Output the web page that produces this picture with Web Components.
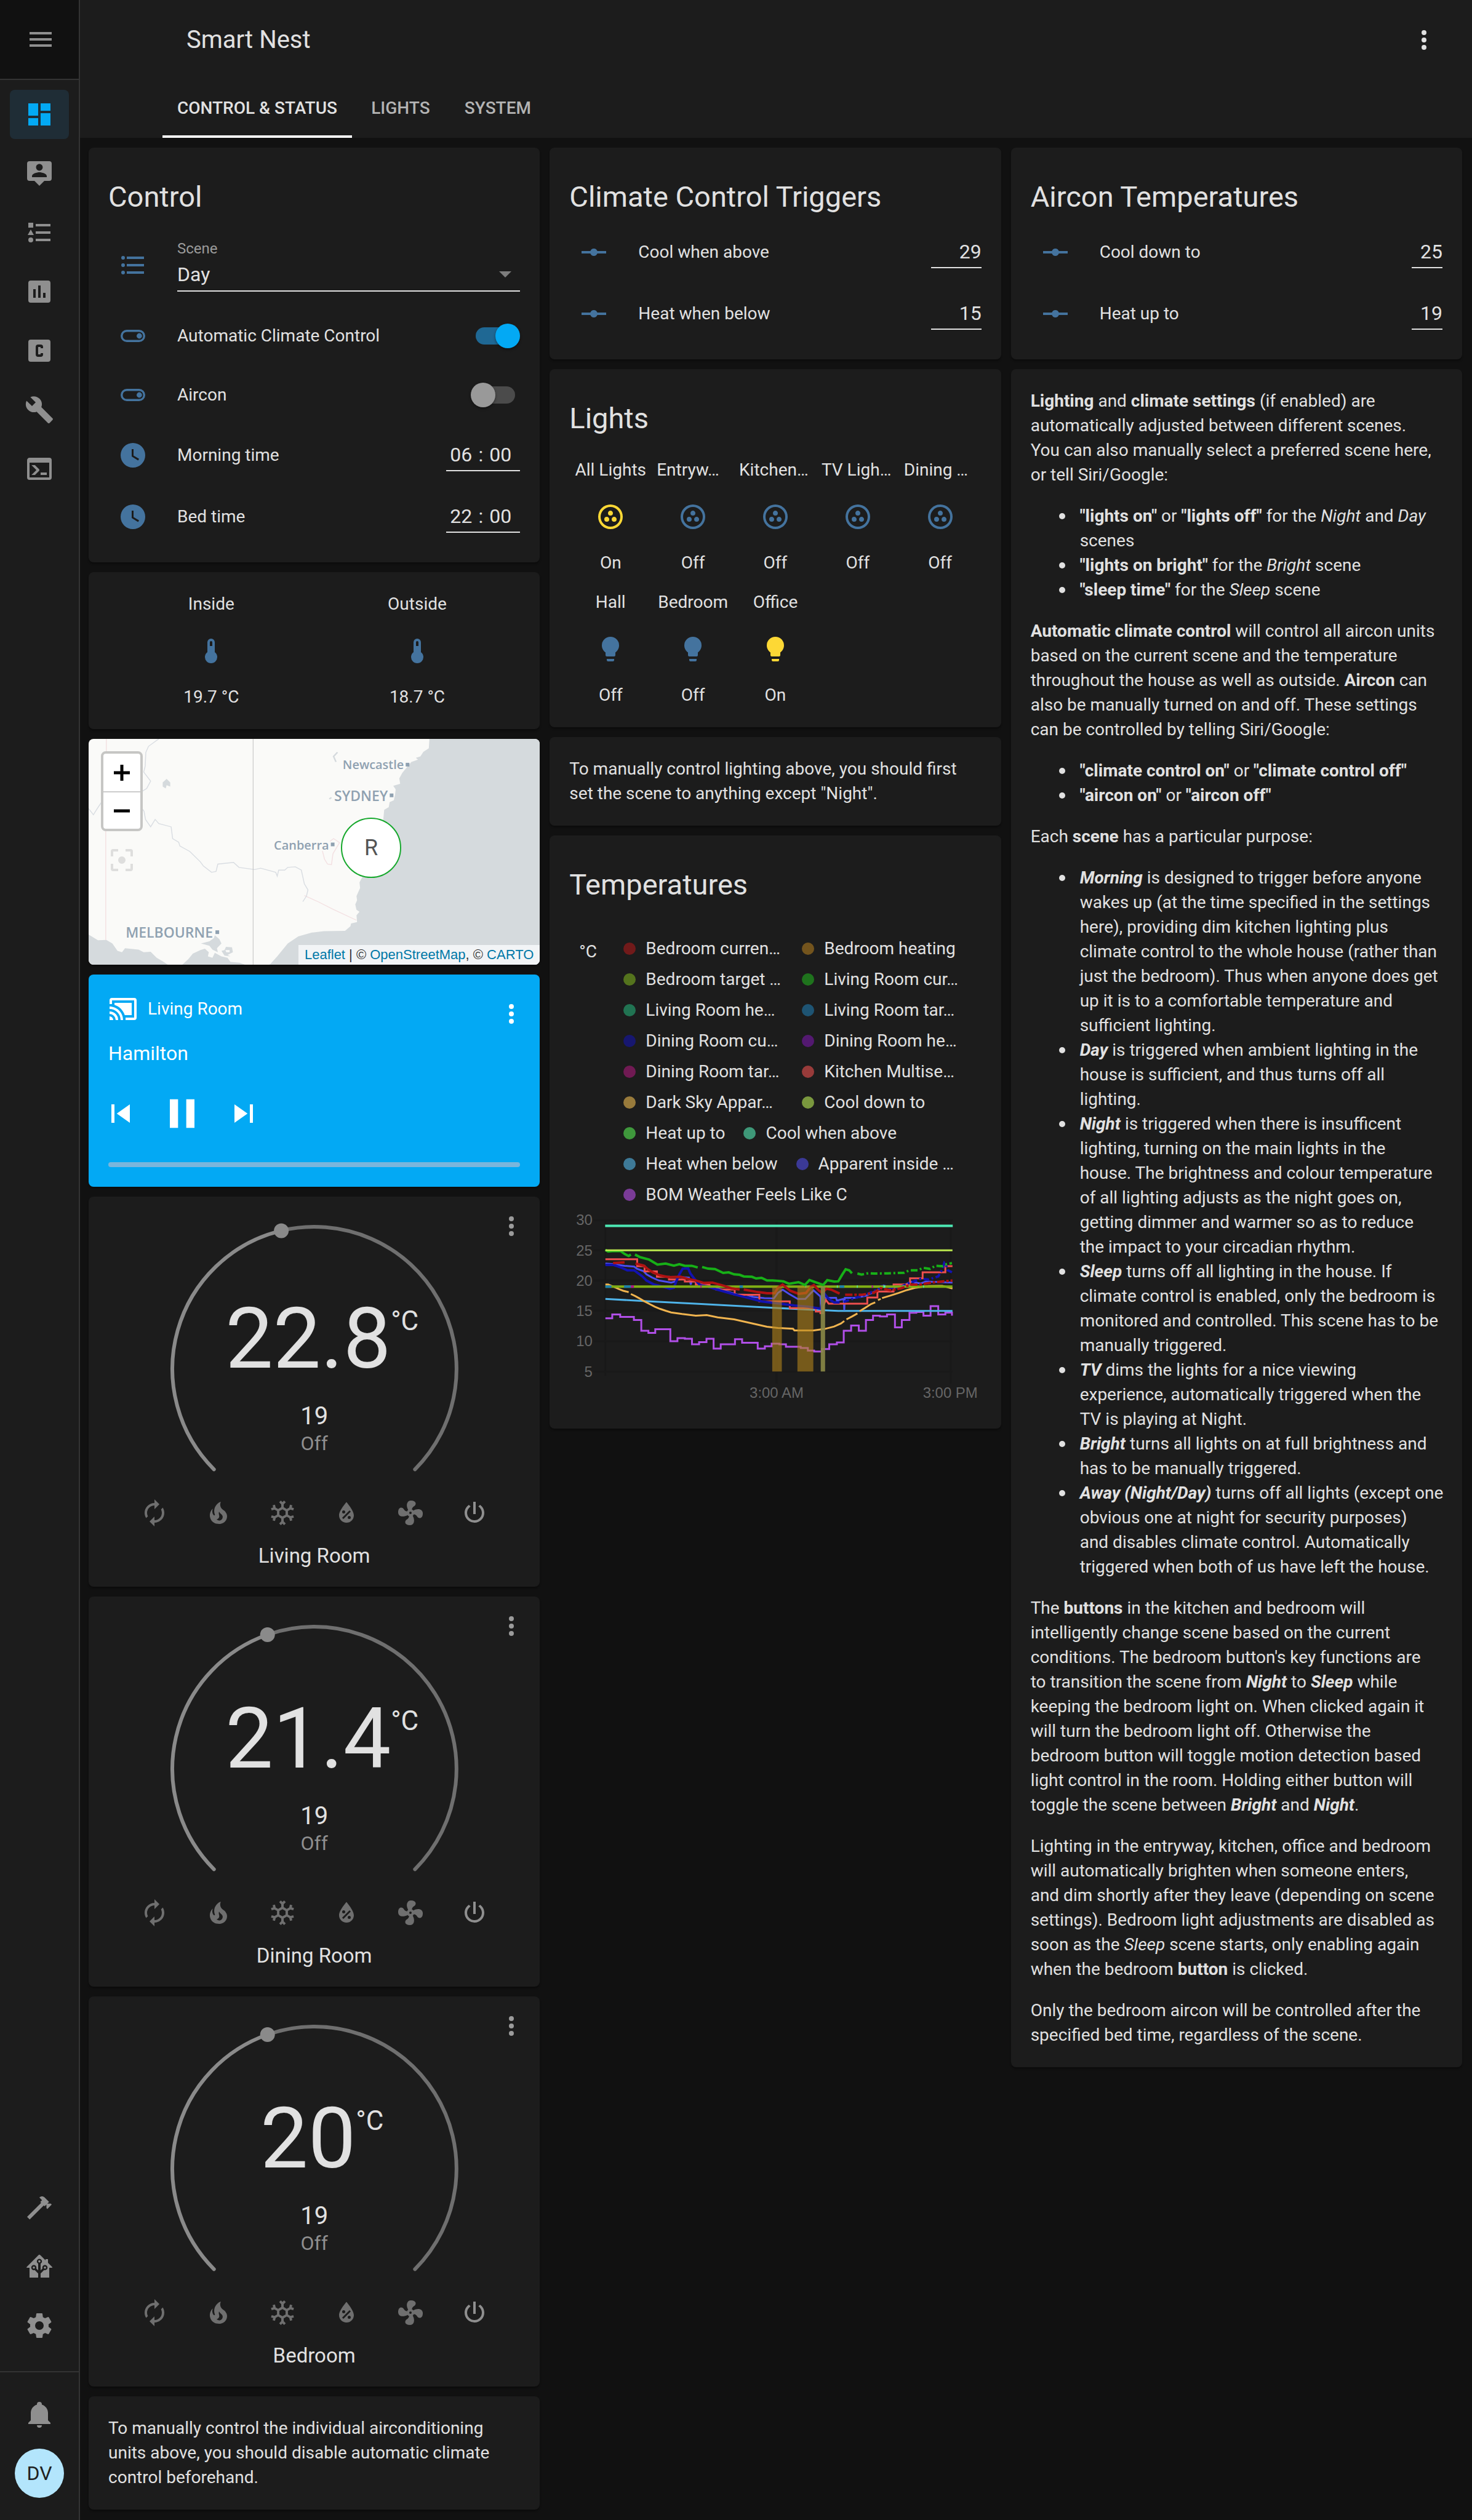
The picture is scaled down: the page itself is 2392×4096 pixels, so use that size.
<!DOCTYPE html>
<html lang="en">
<head>
<meta charset="utf-8">
<title>Smart Nest</title>
<style>
html { background: #111111; }
body {
  margin: 0;
  color: #e1e1e1;
  font: 28px/40px Roboto, "Noto Sans", sans-serif;
  --card: #1c1c1c;
  --line: #333333;
  --muted: #9b9b9b;
  --icon: #44739e;
  --accent: #03a9f4;
  --active: #fdd835;
}
</style>
</head>
<body>
<nest-app>
  <nest-column>
    <nest-card heading="Control">
      <entity-row type="select" icon="list" label="Scene" value="Day"></entity-row>
      <entity-row type="toggle" icon="toggle" label="Automatic Climate Control" on></entity-row>
      <entity-row type="toggle" icon="toggle" label="Aircon"></entity-row>
      <entity-row type="time" icon="clock" label="Morning time" value="06:00"></entity-row>
      <entity-row type="time" icon="clock" label="Bed time" value="22:00"></entity-row>
    </nest-card>
    <nest-card>
      <glance-grid style="--cols:2">
        <glance-item name="Inside" icon="thermometer" state="19.7 °C"></glance-item>
        <glance-item name="Outside" icon="thermometer" state="18.7 °C"></glance-item>
      </glance-grid>
    </nest-card>
    <map-card></map-card>
    <media-card source="Living Room" track="Hamilton"></media-card>
    <thermostat-card name="Living Room" current="22.8" target="19" mode="Off" knob="-13.5"></thermostat-card>
    <thermostat-card name="Dining Room" current="21.4" target="19" mode="Off" knob="-19.3"></thermostat-card>
    <thermostat-card name="Bedroom" current="20" target="19" mode="Off" knob="-19.3"></thermostat-card>
    <nest-card><note-text>To manually control the individual airconditioning units above, you should disable automatic climate control beforehand.</note-text></nest-card>
  </nest-column>
  <nest-column>
    <nest-card heading="Climate Control Triggers">
      <entity-row type="number" icon="vertex" label="Cool when above" value="29"></entity-row>
      <entity-row type="number" icon="vertex" label="Heat when below" value="15"></entity-row>
    </nest-card>
    <nest-card heading="Lights">
      <glance-grid style="--cols:5; padding-top:16px">
        <glance-item name="All Lights" icon="group" state="On" lit></glance-item>
        <glance-item name="Entryw…" cut icon="group" state="Off"></glance-item>
        <glance-item name="Kitchen…" cut icon="group" state="Off"></glance-item>
        <glance-item name="TV Ligh…" cut icon="group" state="Off"></glance-item>
        <glance-item name="Dining …" cut icon="group" state="Off"></glance-item>
        <glance-item name="Hall" icon="bulb" state="Off"></glance-item>
        <glance-item name="Bedroom" icon="bulb" state="Off"></glance-item>
        <glance-item name="Office" icon="bulb" state="On" lit></glance-item>
      </glance-grid>
    </nest-card>
    <nest-card><note-text>To manually control lighting above, you should first set the scene to anything except "Night".</note-text></nest-card>
    <nest-card heading="Temperatures" flush><history-chart></history-chart></nest-card>
  </nest-column>
  <nest-column>
    <nest-card heading="Aircon Temperatures">
      <entity-row type="number" narrow icon="vertex" label="Cool down to" value="25"></entity-row>
      <entity-row type="number" narrow icon="vertex" label="Heat up to" value="19"></entity-row>
    </nest-card>
    <nest-card><help-text></help-text></nest-card>
  </nest-column>
</nest-app>

<script>
const ICONS = {
  menu: 'M3,6H21V8H3V6M3,11H21V13H3V11M3,16H21V18H3V16Z',
  dashboard: 'M13,3V9H21V3M13,21H21V11H13M3,21H11V15H3M3,13H11V3H3V13Z',
  person: 'M20,2H4A2,2 0 0,0 2,4V16A2,2 0 0,0 4,18H8L12,22L16,18H20A2,2 0 0,0 22,16V4A2,2 0 0,0 20,2M12,4.3C13.5,4.3 14.7,5.5 14.7,7C14.7,8.5 13.5,9.7 12,9.7C10.5,9.7 9.3,8.5 9.3,7C9.3,5.5 10.5,4.3 12,4.3M18,15H6V14.1C6,12.1 10,11 12,11C14,11 18,12.1 18,14.1V15Z',
  logbook: 'M5,9.5L7.5,14H2.5L5,9.5M3,4H7V8H3V4M5,20A2,2 0 0,0 7,18A2,2 0 0,0 5,16A2,2 0 0,0 3,18A2,2 0 0,0 5,20M9,5V7H21V5H9M9,19H21V17H9V19M9,13H21V11H9V13Z',
  poll: 'M17,17H15V13H17M13,17H11V7H13M9,17H7V10H9M19,3H5A2,2 0 0,0 3,5V19A2,2 0 0,0 5,21H19A2,2 0 0,0 21,19V5A2,2 0 0,0 19,3Z',
  cbox: 'M5,3H19A2,2 0 0,1 21,5V19A2,2 0 0,1 19,21H5A2,2 0 0,1 3,19V5A2,2 0 0,1 5,3M11,7A2,2 0 0,0 9,9V15A2,2 0 0,0 11,17H13A2,2 0 0,0 15,15V14H13V15H11V9H13V10H15V9A2,2 0 0,0 13,7H11Z',
  wrench: 'M22.7,19L13.6,9.9C14.5,7.6 14,4.9 12.1,3C10.1,1 7.1,0.6 4.7,1.7L9,6L6,9L1.6,4.7C0.4,7.1 0.9,10.1 2.9,12.1C4.8,14 7.5,14.5 9.8,13.6L18.9,22.7C19.3,23.1 19.9,23.1 20.3,22.7L22.6,20.4C23.1,20 23.1,19.3 22.7,19Z',
  console: 'M20,19V7H4V19H20M20,3A2,2 0 0,1 22,5V19A2,2 0 0,1 20,21H4A2,2 0 0,1 2,19V5C2,3.89 2.9,3 4,3H20M13,17V15H18V17H13M9.58,13L5.57,9H8.4L11.7,12.3C12.09,12.69 12.09,13.33 11.7,13.72L8.42,17H5.59L9.58,13Z',
  hammer: 'M2,19.63L13.43,8.2L12.72,7.5L14.14,6.07L12,3.89C13.2,2.7 15.09,2.7 16.27,3.89L19.87,7.5L18.45,8.91H21.29L22,9.62L18.45,13.21L17.74,12.5V9.62L16.27,11.04L15.56,10.33L4.13,21.76L2,19.63Z',
  home: 'M21.8,13H20V21H13V17.67L15.79,14.88L16.5,15C17.66,15 18.6,14.06 18.6,12.9C18.6,11.74 17.66,10.8 16.5,10.8A2.1,2.1 0 0,0 14.4,12.9L14.5,13.61L13,15.13V9.65C13.66,9.29 14.1,8.6 14.1,7.8A2.1,2.1 0 0,0 12,5.7A2.1,2.1 0 0,0 9.9,7.8C9.9,8.6 10.34,9.29 11,9.65V15.13L9.5,13.61L9.6,12.9A2.1,2.1 0 0,0 7.5,10.8A2.1,2.1 0 0,0 5.4,12.9A2.1,2.1 0 0,0 7.5,15L8.21,14.88L11,17.67V21H4V13H2.25C1.83,13 1.42,13 1.42,12.79C1.43,12.57 1.85,12.15 2.28,11.72L11,3C11.33,2.67 11.67,2.33 12,2.33C12.33,2.33 12.67,2.67 13,3L17,7V6H19V9L21.78,11.78C22.18,12.18 22.59,12.59 22.6,12.8C22.6,13 22.2,13 21.8,13M7.5,12A0.9,0.9 0 0,1 8.4,12.9A0.9,0.9 0 0,1 7.5,13.8A0.9,0.9 0 0,1 6.6,12.9A0.9,0.9 0 0,1 7.5,12M16.5,12C17,12 17.4,12.4 17.4,12.9C17.4,13.4 17,13.8 16.5,13.8A0.9,0.9 0 0,1 15.6,12.9A0.9,0.9 0 0,1 16.5,12M12,6.9C12.5,6.9 12.9,7.3 12.9,7.8C12.9,8.3 12.5,8.7 12,8.7C11.5,8.7 11.1,8.3 11.1,7.8C11.1,7.3 11.5,6.9 12,6.9Z',
  cog: 'M12,15.5A3.5,3.5 0 0,1 8.5,12A3.5,3.5 0 0,1 12,8.5A3.5,3.5 0 0,1 15.5,12A3.5,3.5 0 0,1 12,15.5M19.43,12.97C19.47,12.65 19.5,12.33 19.5,12C19.5,11.67 19.47,11.34 19.43,11L21.54,9.37C21.73,9.22 21.78,8.95 21.66,8.73L19.66,5.27C19.54,5.05 19.27,4.96 19.05,5.05L16.56,6.05C16.04,5.66 15.5,5.32 14.87,5.07L14.5,2.42C14.46,2.18 14.25,2 14,2H10C9.75,2 9.54,2.18 9.5,2.42L9.13,5.07C8.5,5.32 7.96,5.66 7.44,6.05L4.95,5.05C4.73,4.96 4.46,5.05 4.34,5.27L2.34,8.73C2.21,8.95 2.27,9.22 2.46,9.37L4.57,11C4.53,11.34 4.5,11.67 4.5,12C4.5,12.33 4.53,12.65 4.57,12.97L2.46,14.63C2.27,14.78 2.21,15.05 2.34,15.27L4.34,18.73C4.46,18.95 4.73,19.03 4.95,18.95L7.44,17.94C7.96,18.34 8.5,18.68 9.13,18.93L9.5,21.58C9.54,21.82 9.75,22 10,22H14C14.25,22 14.46,21.82 14.5,21.58L14.87,18.93C15.5,18.67 16.04,18.34 16.56,17.94L19.05,18.95C19.27,19.03 19.54,18.95 19.66,18.73L21.66,15.27C21.78,15.05 21.73,14.78 21.54,14.63L19.43,12.97Z',
  bell: 'M21,19V20H3V19L5,17V11C5,7.9 7.03,5.17 10,4.29C10,4.19 10,4.1 10,4A2,2 0 0,1 12,2A2,2 0 0,1 14,4C14,4.1 14,4.19 14,4.29C16.97,5.17 19,7.9 19,11V17L21,19M14,21A2,2 0 0,1 12,23A2,2 0 0,1 10,21',
  list: 'M7,5H21V7H7V5M7,13V11H21V13H7M4,4.5A1.5,1.5 0 0,1 5.5,6A1.5,1.5 0 0,1 4,7.5A1.5,1.5 0 0,1 2.5,6A1.5,1.5 0 0,1 4,4.5M4,10.5A1.5,1.5 0 0,1 5.5,12A1.5,1.5 0 0,1 4,13.5A1.5,1.5 0 0,1 2.5,12A1.5,1.5 0 0,1 4,10.5M7,19V17H21V19H7M4,16.5A1.5,1.5 0 0,1 5.5,18A1.5,1.5 0 0,1 4,19.5A1.5,1.5 0 0,1 2.5,18A1.5,1.5 0 0,1 4,16.5Z',
  toggle: 'M17,7H7A5,5 0 0,0 2,12A5,5 0 0,0 7,17H17A5,5 0 0,0 22,12A5,5 0 0,0 17,7M17,15.3H7A3.3,3.3 0 0,1 7,8.7H17A3.3,3.3 0 0,1 17,15.3M17.2,9.8A2.2,2.2 0 0,0 17.2,14.2A2.2,2.2 0 0,0 17.2,9.8Z',
  clock: 'M12,2A10,10 0 0,0 2,12A10,10 0 0,0 12,22A10,10 0 0,0 22,12A10,10 0 0,0 12,2M16.2,16.2L11,13V7H12.5V12.2L17,14.9L16.2,16.2Z',
  thermometer: 'M15,13V5A3,3 0 0,0 9,5V13A5,5 0 1,0 15,13M12,4A1,1 0 0,1 13,5V8H11V5A1,1 0 0,1 12,4Z',
  vertex: 'M2,11H9.17C9.58,9.83 10.69,9 12,9C13.31,9 14.42,9.83 14.83,11H22V13H14.83C14.42,14.17 13.31,15 12,15C10.69,15 9.58,14.17 9.17,13H2V11Z',
  group: 'M15,12C13.89,12 13,12.89 13,14A2,2 0 0,0 15,16A2,2 0 0,0 17,14C17,12.89 16.1,12 15,12M12,20A8,8 0 0,1 4,12A8,8 0 0,1 12,4A8,8 0 0,1 20,12A8,8 0 0,1 12,20M12,2A10,10 0 0,0 2,12A10,10 0 0,0 12,22A10,10 0 0,0 22,12A10,10 0 0,0 12,2M14,9C14,7.89 13.1,7 12,7C10.89,7 10,7.89 10,9A2,2 0 0,0 12,11A2,2 0 0,0 14,9M9,12A2,2 0 0,0 7,14A2,2 0 0,0 9,16A2,2 0 0,0 11,14C11,12.89 10.1,12 9,12Z',
  bulb: 'M12,2A7,7 0 0,0 5,9C5,11.38 6.19,13.47 8,14.74V17A1,1 0 0,0 9,18H15A1,1 0 0,0 16,17V14.74C17.81,13.47 19,11.38 19,9A7,7 0 0,0 12,2M9,21A1,1 0 0,0 10,22H14A1,1 0 0,0 15,21V20H9V21Z',
  dots: 'M12,16A2,2 0 0,1 12,20A2,2 0 0,1 12,16M12,10A2,2 0 0,1 12,14A2,2 0 0,1 12,10M12,4A2,2 0 0,1 12,8A2,2 0 0,1 12,4Z',
  cast: 'M21,3H3A2,2 0 0,0 1,5V8H3V5H21V19H14V21H21A2,2 0 0,0 23,19V5A2,2 0 0,0 21,3M1,10V12A9,9 0 0,1 10,21H12C12,14.92 7.07,10 1,10M19,7H5V8.63C8.96,9.91 12.09,13.04 13.37,17H19V7M1,14V16A5,5 0 0,1 6,21H8A7,7 0 0,0 1,14M1,18V21H4A3,3 0 0,0 1,18Z',
  prev: 'M6,18V6H8V18H6M9.5,12L18,6V18L9.5,12Z',
  next: 'M16,18H18V6H16M6,18L14.5,12L6,6V18Z',
  pause: 'M14,19H18V5H14M6,19H10V5H6V19Z',
  auto: 'M12,6V9L16,5L12,1V4A8,8 0 0,0 4,12C4,13.57 4.46,15.03 5.24,16.26L6.7,14.8C6.25,13.97 6,13 6,12A6,6 0 0,1 12,6M18.76,7.74L17.3,9.2C17.74,10.04 18,11 18,12A6,6 0 0,1 12,18V15L8,19L12,23V20A8,8 0 0,0 20,12C20,10.43 19.54,8.97 18.76,7.74Z',
  fire: 'M17.66,11.2C17.43,10.9 17.15,10.64 16.89,10.38C16.22,9.78 15.46,9.35 14.82,8.72C13.33,7.26 13,4.85 13.95,3C13,3.23 12.17,3.75 11.46,4.32C8.87,6.4 7.85,10.07 9.07,13.22C9.11,13.32 9.15,13.42 9.15,13.55C9.15,13.77 9,13.97 8.8,14.05C8.57,14.15 8.33,14.09 8.14,13.93C8.08,13.88 8.04,13.83 8,13.76C6.87,12.33 6.69,10.28 7.45,8.64C5.78,10 4.87,12.3 5,14.47C5.06,14.97 5.12,15.47 5.29,15.97C5.43,16.57 5.7,17.17 6,17.7C7.08,19.43 8.95,20.67 10.96,20.92C13.1,21.19 15.39,20.8 17.03,19.32C18.86,17.66 19.5,15 18.56,12.72L18.43,12.46C18.22,12 17.66,11.2 17.66,11.2M14.5,17.5C14.22,17.74 13.76,18 13.4,18.1C12.28,18.5 11.16,17.94 10.5,17.28C11.69,17 12.4,16.12 12.61,15.23C12.78,14.43 12.46,13.77 12.33,13C12.21,12.26 12.23,11.63 12.5,10.94C12.69,11.32 12.89,11.7 13.13,12C13.9,13 15.11,13.44 15.37,14.8C15.41,14.94 15.43,15.08 15.43,15.23C15.46,16.05 15.1,16.95 14.5,17.5H14.5Z',
  snow: 'M20.79,13.95L18.46,14.57L16.46,13.44V10.56L18.46,9.43L20.79,10.05L21.31,8.12L19.54,7.65L20,5.88L18.07,5.36L17.45,7.69L15.45,8.82L13,7.38V5.12L14.71,3.41L13.29,2L12,3.29L10.71,2L9.29,3.41L11,5.12V7.38L8.5,8.82L6.5,7.69L5.92,5.36L4,5.88L4.47,7.65L2.7,8.12L3.22,10.05L5.55,9.43L7.55,10.56V13.45L5.55,14.58L3.22,13.96L2.7,15.89L4.47,16.36L4,18.12L5.93,18.64L6.55,16.31L8.55,15.18L11,16.62V18.88L9.29,20.59L10.71,22L12,20.71L13.29,22L14.7,20.59L13,18.88V16.62L15.5,15.17L17.5,16.3L18.12,18.63L20,18.12L19.53,16.35L21.3,15.88L20.79,13.95M9.5,10.56L12,9.11L14.5,10.56V13.44L12,14.89L9.5,13.44V10.56Z',
  water: 'M12,3.25C12,3.25 6,10 6,14C6,17.32 8.69,20 12,20A6,6 0 0,0 18,14C18,10 12,3.25 12,3.25M14.47,9.97L15.53,11.03L9.53,17.03L8.47,15.97M9.75,10A1.25,1.25 0 0,1 11,11.25A1.25,1.25 0 0,1 9.75,12.5A1.25,1.25 0 0,1 8.5,11.25A1.25,1.25 0 0,1 9.75,10M14.25,14.5A1.25,1.25 0 0,1 15.5,15.75A1.25,1.25 0 0,1 14.25,17A1.25,1.25 0 0,1 13,15.75A1.25,1.25 0 0,1 14.25,14.5Z',
  fan: 'M12,11A1,1 0 0,0 11,12A1,1 0 0,0 12,13A1,1 0 0,0 13,12A1,1 0 0,0 12,11M12.5,2C17,2 17.11,5.57 14.75,6.75C13.76,7.24 13.32,8.29 13.13,9.22C13.61,9.42 14.03,9.73 14.35,10.13C18.05,8.13 22.03,8.92 22.03,12.5C22.03,17 18.46,17.1 17.28,14.73C16.78,13.74 15.72,13.3 14.79,13.11C14.59,13.59 14.28,14 13.88,14.34C15.87,18.03 15.08,22 11.5,22C7,22 6.91,18.42 9.27,17.24C10.25,16.75 10.69,15.71 10.89,14.79C10.4,14.59 9.97,14.27 9.65,13.87C5.96,15.85 2,15.07 2,11.5C2,7 5.56,6.89 6.74,9.26C7.24,10.25 8.29,10.68 9.22,10.87C9.41,10.39 9.73,9.97 10.14,9.65C8.15,5.96 8.94,2 12.5,2Z',
  power: 'M16.56,5.44L15.11,6.89C16.84,7.94 18,9.83 18,12A6,6 0 0,1 12,18A6,6 0 0,1 6,12C6,9.83 7.16,7.94 8.88,6.88L7.44,5.44C5.36,6.88 4,9.28 4,12A8,8 0 0,0 12,20A8,8 0 0,0 20,12C20,9.28 18.64,6.88 16.56,5.44M13,3H11V13H13',
  focus: 'M12,9A3,3 0 0,0 9,12A3,3 0 0,0 12,15A3,3 0 0,0 15,12A3,3 0 0,0 12,9M19,19H15V21H19A2,2 0 0,0 21,19V15H19M19,3H15V5H19V9H21V5A2,2 0 0,0 19,3M5,5H9V3H5A2,2 0 0,0 3,5V9H5M5,15H3V19A2,2 0 0,0 5,21H9V19H5V15Z'
};

const RESET = `
  :host, *, *::before, *::after { box-sizing: border-box; }
  button { appearance: none; border: 0; padding: 0; margin: 0; background: none; color: inherit; font: inherit; cursor: pointer; display: flex; align-items: center; justify-content: center; }
  a { color: inherit; text-decoration: none; }
  ul { list-style: none; margin: 0; padding: 0; }
`;

function define(name, css, html) {
  customElements.define(name, class extends HTMLElement {
    constructor() {
      super();
      this.attachShadow({ mode: 'open' });
    }
    connectedCallback() {
      if (this.shadowRoot.childNodes.length) return;
      const body = typeof html === 'function' ? html(this) : html;
      this.shadowRoot.innerHTML = `<style>${RESET}${css}</style>${body}`;
    }
  });
}

define('nest-icon',
  `:host { display: block; width: var(--size, 48px); height: var(--size, 48px); flex: none; }
   svg { display: block; width: 100%; height: 100%; fill: currentColor; }`,
  el => `<svg viewBox="0 0 24 24" aria-hidden="true"><path fill-rule="${el.getAttribute('name') === 'water' ? 'evenodd' : 'nonzero'}" d="${ICONS[el.getAttribute('name')]}"/></svg>`);

define('nest-sidebar',
  `:host { display: flex; flex-direction: column; width: 130px; flex: none; background: var(--card); border-right: 2px solid var(--line); color: #8f8f8f; }
   .top { height: 130px; background: #111; border-bottom: 2px solid var(--line); display: flex; align-items: center; justify-content: center; padding-left: 4px; }
   ul { display: flex; flex-direction: column; gap: 16px; padding: 16px; }
   a { display: flex; height: 80px; align-items: center; justify-content: center; border-radius: 8px; }
   a.on { color: var(--accent); background: #1f2d36; }
   .low { margin-top: auto; padding-bottom: 34px; }
   .foot { border-top: 2px solid var(--line); display: flex; flex-direction: column; align-items: center; gap: 16px; padding: 28px 16px 36px; }
   .foot button { width: 80px; height: 80px; }
   .foot .user { border-radius: 50%; background: #b3e5fc; color: #212121; font-size: 32px; }`,
  () => {
    const link = (i, label, on) => `<li><a href="#${i}" aria-label="${label}"${on ? ' class="on"' : ''}><nest-icon name="${i}"></nest-icon></a></li>`;
    return `<div class="top"><button aria-label="Menu"><nest-icon name="menu"></nest-icon></button></div>
      <nav><ul>${link('dashboard', 'Overview', true)}${link('person', 'Map')}${link('logbook', 'Logbook')}${link('poll', 'History')}${link('cbox', 'Configurator')}${link('wrench', 'Tools')}${link('console', 'Terminal')}</ul></nav>
      <ul class="low">${link('hammer', 'Developer tools')}${link('home', 'Supervisor')}${link('cog', 'Configuration')}</ul>
      <div class="foot"><button aria-label="Notifications"><nest-icon name="bell"></nest-icon></button><button class="user">DV</button></div>`;
  });

define('nest-header',
  `:host { display: flex; flex-direction: column; height: 224px; background: var(--card); }
   .bar { display: flex; align-items: center; justify-content: space-between; height: 128px; padding: 2px 54px 0 173px; }
   h1 { margin: 0; font-size: 40px; line-height: 48px; font-weight: 400; }
   nav { display: flex; height: 96px; padding-left: 134px; }
   nav a { min-width: 158px; padding: 0 24px; display: flex; align-items: center; justify-content: center; font-weight: 500; color: #b3b3b3; border-bottom: 4px solid transparent; border-top: 4px solid transparent; }
   nav a.on { color: #e1e1e1; border-bottom-color: #fff; }`,
  `<div class="bar"><h1>Smart Nest</h1><button aria-label="Options"><nest-icon name="dots"></nest-icon></button></div>
   <nav><a class="on" href="#control">CONTROL &amp; STATUS</a><a href="#lights">LIGHTS</a><a href="#system">SYSTEM</a></nav>`);

define('nest-app',
  `:host { display: flex; min-height: 100vh; }
   .page { flex: 1; min-width: 0; display: flex; flex-direction: column; }
   main { display: flex; align-items: flex-start; gap: 16px; padding: 16px 16px 16px 14px; }`,
  `<nest-sidebar></nest-sidebar><div class="page"><nest-header></nest-header><main><slot></slot></main></div>`);

define('nest-column',
  `:host { display: flex; flex-direction: column; gap: 16px; flex: 1 1 0; min-width: 0; }`,
  `<slot></slot>`);

define('nest-card',
  `:host { display: block; background: var(--card); border-radius: 8px; box-shadow: 0 3px 3px rgba(0,0,0,.3); }
   h2 { margin: 0; height: 128px; padding: 48px 32px 0; font-size: 47px; line-height: 64px; font-weight: 400; }
   .body { display: flex; flex-direction: column; gap: 16px; padding: 32px; }
   h2 + .body { padding-top: 0; }
   :host([flush]) .body { padding: 0; }`,
  el => (el.hasAttribute('heading') ? `<h2>${el.getAttribute('heading')}</h2>` : '') + `<div class="body"><slot></slot></div>`);

define('note-text', `:host { display: block; }`, `<slot></slot>`);

define('entity-row',
  `:host { display: flex; align-items: center; height: 84px; }
   :host([type=toggle]) { height: 80px; }
   :host([type=select]) { height: 122px; padding-top: 4px; }
   nest-icon { color: var(--icon); margin: 0 48px 0 16px; }
   .name { flex: 1; }
   input, select { appearance: none; border: 0; border-radius: 0; padding: 0; margin: 0; background: none; color: inherit; font: inherit; font-size: 32px; outline: 0; }
   input[type=number] { appearance: textfield; width: 82px; height: 52px; border-bottom: 2px solid #e1e1e1; text-align: right; }
   :host([narrow]) input[type=number] { width: 50px; }
   input::-webkit-inner-spin-button { appearance: none; margin: 0; }
   .time { display: flex; align-items: center; width: 120px; height: 52px; padding: 0 14px 0 6px; border-bottom: 2px solid #e1e1e1; font-size: 32px; }
   .time input { width: 36px; height: 50px; }
   .time span { width: 28px; text-align: center; }
   .switch { position: relative; width: 64px; height: 28px; margin-right: 8px; border-radius: 14px; background: #4b4b4b; }
   .switch::before { content: ""; position: absolute; top: -6px; left: -8px; width: 40px; height: 40px; border-radius: 50%; background: #999; box-shadow: 0 2px 4px rgba(0,0,0,.4); }
   .switch:checked { background: #1f6894; }
   .switch:checked::before { left: 32px; background: var(--accent); }
   .field { flex: 1; display: flex; flex-direction: column; }
   .field label { font-size: 24px; line-height: 32px; color: var(--muted); }
   .pick { display: flex; align-items: center; border-bottom: 2px solid #e1e1e1; }
   .pick select { flex: 1; height: 52px; }
   .pick svg { width: 20px; height: 10px; margin: 0 14px 0 -34px; fill: #7d7d7d; pointer-events: none; }`,
  el => {
    const a = n => el.getAttribute(n), type = a('type');
    const icon = `<nest-icon name="${a('icon')}"></nest-icon>`;
    if (type === 'select') return `${icon}<div class="field"><label for="c">${a('label')}</label><div class="pick"><select id="c"><option>${a('value')}</option></select><svg viewBox="0 0 20 10"><path d="M0,0H20L10,10Z"/></svg></div></div>`;
    const name = `${icon}<label class="name" for="c">${a('label')}</label>`;
    if (type === 'toggle') return `${name}<input id="c" class="switch" type="checkbox" role="switch"${el.hasAttribute('on') ? ' checked' : ''}>`;
    if (type === 'number') return `${name}<input id="c" type="number" value="${a('value')}">`;
    const [h, m] = a('value').split(':');
    return `${name}<div class="time"><input id="c" type="text" value="${h}"><span>:</span><input type="text" aria-label="${a('label')} minutes" value="${m}"></div>`;
  });

define('glance-grid',
  `:host { display: grid; grid-template-columns: repeat(var(--cols), 1fr); row-gap: 24px; }`,
  `<slot></slot>`);

define('glance-item',
  `:host { display: flex; flex-direction: column; align-items: center; min-width: 0; padding: 0 8px; white-space: nowrap; }
   :host([cut]) .name { align-self: stretch; }
   .icon { height: 111px; display: flex; align-items: center; color: var(--icon); }
   :host([lit]) .icon { color: var(--active); }`,
  el => `<span class="name">${el.getAttribute('name')}</span><span class="icon"><nest-icon name="${el.getAttribute('icon')}"></nest-icon></span><span>${el.getAttribute('state')}</span>`);

define('map-card',
  `:host { display: block; position: relative; height: 367px; border-radius: 8px; overflow: hidden; background: #fafaf8; color: #333; box-shadow: 0 3px 3px rgba(0,0,0,.3); }
   svg { display: block; width: 100%; height: 100%; }
   text { font: 600 20px "Open Sans", Lato, sans-serif; fill: #8fa1b1; text-anchor: end; }
   text.city { font-size: 23px; }
   .zoom { position: absolute; left: 20px; top: 20px; border: 4px solid #c6c6c4; border-radius: 8px; background: #fff; color: #000; }
   .zoom button { width: 60px; height: 61px; }
   .zoom button + button { border-top: 2px solid #ccc; }
   .zoom svg { width: 28px; height: 28px; }
   .fit { position: absolute; left: 30px; top: 173px; color: #dededd; }
   .pin { position: absolute; left: 410px; top: 128px; width: 98px; height: 98px; border: 2px solid #17a82d; border-radius: 50%; background: #fff; color: #555; font-size: 36px; }
   .credit { position: absolute; right: 0; bottom: 0; height: 32px; padding: 0 10px; font: 22px/32px "Liberation Sans", Arial, sans-serif; background: #f2f4f6; }
   .credit a { color: #0078a8; }`,
  `<svg viewBox="144 1204 736 368" preserveAspectRatio="xMidYMid slice" aria-hidden="true">
     <g transform="translate(130,900) scale(.49107,.44643)" fill="none" stroke-width="3">
       <path d="M88,681V730M86,1015V1415M745,1253L790,1275 840,1303 918,1343M805,1090L812,1120 822,1138 835,1140 840,1100 855,1072 862,1060 842,1045 830,1055" stroke="#f3e0e2"/>
       <path d="M262,681L228,708 219,730 217,780 212,802 235,835 222,862 203,875M29,935L45,958 58,935 72,912M203,930L213,945 218,975 235,1002 250,975 262,990 303,1002 308,1045 328,1058 332,1072 365,1092 400,1130 410,1145 437,1168 452,1165 458,1138 510,1132 528,1150 580,1158 600,1153 650,1168 655,1182 660,1160 680,1160 690,1150 715,1148 735,1160 745,1210 757,1232 752,1255 740,1275" stroke="#d9dde2"/>
       <path d="M855,730L842,745 850,765M828,900L835,895" stroke="#d5dadd" stroke-width="5"/>
       <path d="M1160,681L1158,715 1140,728 1130,745 1115,750 1122,757 1100,765 1085,785 1070,805 1060,825 1063,845 1040,852 1048,865 1046,885 1042,905 1028,912 1025,930 1010,940 1007,975 990,1010 975,1060 965,1120 945,1170 935,1190 928,1205 930,1225 918,1255 920,1270 914,1285 918,1305 928,1312 918,1325 920,1350 900,1355 898,1365 880,1382 810,1383 770,1388 725,1402 690,1428 655,1475 632,1503 628,1505H1527V681Z
                M29,1395L60,1416 88,1415 108,1428 125,1455 140,1460 150,1445 195,1450 212,1460 235,1458 255,1480 275,1493 292,1505H29Z
                M340,1505L360,1485 375,1465 400,1452 415,1447 428,1460 425,1475 440,1480 448,1462 470,1475 490,1480 500,1495 530,1498 548,1505Z
                M448,1398L463,1412 470,1428 455,1445 458,1460 440,1450 430,1436 402,1428 430,1420 445,1408Z
                M275,840L288,827 300,840 300,855 288,850 285,862 275,855Z
                M485,1440L505,1442 508,1460 490,1470 500,1475 480,1472 470,1455 480,1452Z" fill="#d5dadd" stroke="none"/>
       <path d="M483,1452H497V1460H486Z" fill="#fafaf8"/>
       <path d="M575,681V1505" stroke="#bdbdbd" stroke-width="2"/>
     </g>
     <g fill="#8fa1b1"><rect x="661" y="1243" width="6" height="6"/><rect x="635" y="1293" width="6" height="6"/><rect x="539" y="1373" width="6" height="6"/><rect x="351" y="1516" width="6" height="6"/></g>
     <text x="658" y="1253">Newcastle</text><text class="city" x="632" y="1305">SYDNEY</text><text x="536" y="1384">Canberra</text><text class="city" x="347" y="1528">MELBOURNE</text>
   </svg>
   <div class="zoom"><button aria-label="Zoom in"><svg viewBox="0 0 28 28"><path d="M1,14H27M14,1V27" stroke="#000" stroke-width="5"/></svg></button><button aria-label="Zoom out"><svg viewBox="0 0 28 28"><path d="M1,14H27" stroke="#000" stroke-width="5"/></svg></button></div>
   <button class="fit" aria-label="Fit map"><nest-icon name="focus"></nest-icon></button>
   <button class="pin">R</button>
   <div class="credit"><a href="#leaflet">Leaflet</a> | © <a href="#osm">OpenStreetMap</a>, © <a href="#carto">CARTO</a></div>`);

define('media-card',
  `:host { display: flex; flex-direction: column; height: 345px; padding: 32px; border-radius: 8px; background: var(--accent); color: #fff; box-shadow: 0 3px 3px rgba(0,0,0,.3); }
   .head { display: flex; align-items: center; height: 48px; }
   .head span { flex: 1; padding-left: 16px; }
   .head button { margin-right: -10px; padding-top: 16px; }
   .track { font-size: 32px; line-height: 48px; padding-top: 24px; }
   .keys { display: flex; align-items: center; gap: 24px; height: 96px; margin: 26px 0 0 -10px; }
   .keys button { width: 60px; height: 80px; }
   .keys .mid { width: 92px; }
   .bar { height: 8px; border-radius: 4px; background: #7ab6dc; margin-top: auto; }`,
  el => `<div class="head"><nest-icon name="cast"></nest-icon><span>${el.getAttribute('source')}</span><button aria-label="More"><nest-icon name="dots"></nest-icon></button></div>
    <div class="track">${el.getAttribute('track')}</div>
    <div class="keys"><button aria-label="Previous"><nest-icon style="--size:60px" name="prev"></nest-icon></button><button class="mid" aria-label="Pause"><nest-icon style="--size:80px" name="pause"></nest-icon></button><button aria-label="Next"><nest-icon style="--size:60px" name="next"></nest-icon></button></div>
    <div class="bar" role="progressbar" aria-label="Progress"></div>`);

define('thermostat-card',
  `:host { display: flex; flex-direction: column; align-items: center; position: relative; height: 634px; padding-top: 36px; border-radius: 8px; background: var(--card); box-shadow: 0 3px 3px rgba(0,0,0,.3); }
   .more { position: absolute; right: 22px; top: 24px; color: #9b9b9b; }
   .dial { display: grid; width: 488px; height: 426px; justify-items: center; }
   .dial > * { grid-area: 1 / 1; }
   .dial svg { width: 488px; height: 426px; overflow: visible; }
   .read { display: flex; flex-direction: column; align-items: center; padding-top: 115px; }
   .now { display: flex; align-items: flex-start; font-size: 138px; line-height: 160px; }
   .now sup { font-size: 44px; line-height: 52px; padding-top: 25px; width: 20px; white-space: nowrap; }
   .goal { font-size: 40px; line-height: 48px; padding-top: 22px; }
   .mode { font-size: 32px; line-height: 40px; color: #8f8f8f; }
   .modes { display: flex; gap: 56px; color: #6f6f6f; padding-top: 28px; }
   .modes .on { color: #8f8f8f; }
   .name { font-size: 33px; line-height: 48px; padding-top: 22px; }`,
  el => {
    const a = n => el.getAttribute(n), r = 231, t = a('knob') * Math.PI / 180;
    const x = (244 + r * Math.sin(t)).toFixed(1), y = (244 - r * Math.cos(t)).toFixed(1);
    const b = (n, on) => `<button${on ? ' class="on"' : ''} aria-label="${n}"><nest-icon name="${n}"></nest-icon></button>`;
    return `<button class="more" aria-label="More"><nest-icon name="dots"></nest-icon></button>
      <div class="dial"><svg viewBox="0 0 488 426" aria-hidden="true"><g fill="none" stroke-width="6" stroke-linecap="round"><path d="M${x},${y}A231,231 0 0 1 407.3,407.3" stroke="#6f6f6f"/><path d="M80.7,407.3A231,231 0 0 1 ${x},${y}" stroke="#8a8a8a"/></g><circle cx="${x}" cy="${y}" r="12" fill="#8a8a8a"/></svg>
      <div class="read"><div class="now">${a('current')}<sup>°C</sup></div><div class="goal">${a('target')}</div><div class="mode">${a('mode')}</div></div></div>
      <div class="modes">${b('auto')}${b('fire')}${b('snow')}${b('water')}${b('fan')}${b('power', true)}</div>
      <div class="name">${a('name')}</div>`;
  });

define('history-chart',
  `:host { display: block; padding: 31px 0 8px; }
   .legend { display: flex; }
   .unit { width: 120px; padding-left: 48px; padding-top: 10px; }
   ul { flex: 1; display: flex; flex-direction: column; }
   li { height: 50px; display: flex; gap: 30px; }
   li span { display: flex; align-items: center; gap: 16px; white-space: nowrap; }
   li span.w { width: 260px; }
   li i { width: 20px; height: 20px; border-radius: 50%; flex: none; }
   svg { display: block; width: 698px; max-width: 100%; margin-left: 24px; }
   text { font: 24px "Liberation Sans", Arial, sans-serif; fill: #666; }
   .plot path { fill: none; stroke-width: 3; vector-effect: non-scaling-stroke; }`,
  () => {
    const rows = [
      [['#711a1a', 'Bedroom curren…', 1], ['#73541d', 'Bedroom heating', 1]],
      [['#54731d', 'Bedroom target …', 1], ['#1f731d', 'Living Room cur…', 1]],
      [['#217352', 'Living Room he…', 1], ['#1e5473', 'Living Room tar…', 1]],
      [['#171770', 'Dining Room cu…', 1], ['#531970', 'Dining Room he…', 1]],
      [['#701a53', 'Dining Room tar…', 1], ['#983b3a', 'Kitchen Multise…', 1]],
      [['#987a3b', 'Dark Sky Appar…', 1], ['#7a983e', 'Cool down to', 1]],
      [['#3f983c', 'Heat up to'], ['#3e9878', 'Cool when above']],
      [['#3e7a98', 'Heat when below'], ['#3b3996', 'Apparent inside …']],
      [['#7a3b97', 'BOM Weather Feels Like C']]
    ];
    const item = ([c, n, w]) => `<span${w ? ' class="w"' : ''}><i style="background:${c}"></i>${n}</span>`;
    const line = (c, d, extra = '') => `<path stroke="${c}" d="${d}" ${extra}/>`;
    const ticks = [[30, 36], [25, 86], [20, 135], [15, 185], [10, 234], [5, 284]];
    return `<div class="legend"><span class="unit">°C</span><ul>${rows.map(r => `<li>${r.map(item).join('')}</li>`).join('')}</ul></div>
    <svg viewBox="0 12 700 348" role="img" aria-label="Temperatures over time">
      ${ticks.map(([t, y]) => `<text x="46" y="${y}" text-anchor="end">${t}</text>`).join('')}
      <text x="346" y="318" text-anchor="middle">3:00 AM</text><text x="629" y="318" text-anchor="middle">3:00 PM</text>
      <g class="plot" transform="scale(.44643,.33333)">
        ${line('#191919', 'M107,85H1417M107,232H1417M107,380H1417M107,529H1417M107,677H1417M107,825H1417M149,85V845M775,85V885M1410,85V885')}
        ${line('#b14fe8', 'M150,565H175V546H204V558H254V573H281V626H307V636H332V618H387V677H413V662H440V665H466V692H492V681H519V665H545V713H571V692H623V667H649V684H706V713H732V702H757V689H785V692H809V704H863V710H889V723H912V727H940V715H967V692H995V683H1020V626H1047V600H1075V626H1101V573H1127V552H1152V556H1178V546H1207V609H1232V573H1260V538H1285V534H1311V552H1337V505H1365V546H1391V537H1415V552')}
        ${line('#4fb4ea', 'M150,470L300,481 500,495 700,509 900,523 1000,529 1417,529')}
        ${line('#f0b44f', 'M150,399H160L175,408 185,413 200,422 215,430 235,437M243,446L260,457 275,468 290,480 310,494 330,508 350,519 370,528 390,536 430,544 480,552 520,549 560,560 620,570 660,582 700,594 740,606 780,612 835,616 840,624 910,624 950,617 985,605 1010,590 1022,578M1030,570L1050,556 1070,541M1078,530L1100,512 1120,495 1135,487M1145,476L1155,470M1160,466L1190,454 1220,441 1250,427 1280,416 1330,407 1380,406 1417,419')}
        ${line('#4d4df0', 'M150,297L180,300 220,308 255,312 265,322 290,335 300,350 320,365 345,380 390,390 405,385 415,362 455,366 462,400 465,380 490,385 520,402 560,418 600,436 630,448 665,450 690,460 730,466 765,468 780,440 797,425 820,445 852,470 880,470 910,428 935,458 937,515 942,455 955,465 992,465 995,478 1020,470 1022,525 1024,465 1060,465 1100,455 1140,430 1165,405 1200,415 1240,405 1265,385 1300,395 1320,385 1417,390')}
        ${line('#ee4f4f', 'M150,276H266V310H293V335H338V362H382V375H440V385H480V400H530V412H555V424H622V450H712V482H823V515H918V532H935V540H945V505L955,475 965,493H1106V463H1143V434H1202V399H1262V369H1308V340H1391V310H1417')}
        ${line('#1212b0', 'M150,304H180L210,318 230,330 255,330 270,345 285,360 300,380 325,398 360,410 385,420 400,415 410,380 420,350 432,322 452,320 460,345 475,372 495,403 520,408 560,425 620,448 680,468 720,482 770,490 840,502 890,508 937,518 950,445 965,470 985,487 1005,487', 'style="stroke-width:4"')}
        ${line('#1212b0', 'M1020,485L1060,466 1100,450 1140,425 1165,402 1180,415 1220,415 1260,392 1300,372 1330,375 1365,360 1380,325 1387,295 1395,310 1400,330 1415,340', 'stroke-dasharray="9 4 3 4" style="stroke-width:4"')}
        ${line('#7fae14', 'M150,410H1417', 'style="stroke-width:4"')}
        ${line('#1c7fae', 'M150,410H172M218,410H243M640,410H652M1005,410H1022', 'style="stroke-width:4"')}
        ${line('#b0128c', 'M243,410H254M497,410H501M1122,410H1127', 'style="stroke-width:4"')}
        ${line('#4de8b4', 'M880,410H883M995,410H998M1068,410H1071M1165,410H1172M1235,410H1239M1310,410H1313', 'style="stroke-width:4"')}
        ${line('#ae1212', 'M178,295L220,291M260,297L290,307 305,325 325,342 350,355 380,364 425,362 450,372 480,380 510,392 540,390 580,405 610,418 640,424M655,424L700,435 740,442 768,442 780,415 797,400 825,430 855,445 882,441 900,410 911,402 930,430 942,440 957,420 975,425 1005,444', 'style="stroke-width:4"')}
        ${line('#ae1212', 'M1025,450H1085L1130,440 1155,418 1190,428 1230,418 1265,400 1300,400 1340,390 1417,380', 'stroke-dasharray="12 3 4 3" style="stroke-width:4"')}
        ${line('#17b017', 'M150,230L160,238 175,236 205,236 220,250 235,260 243,253M258,253L275,265 310,278 340,302 370,297 400,307 420,300 440,308 465,308 487,316M503,314L525,322 550,324 580,343 600,340 620,350 640,352 655,360 685,362 700,370 720,367 740,380 760,380 800,384 820,396 855,388 878,402 895,378 925,392 945,402 960,378 985,385 1000,384 1015,350 1027,325 1040,330 1050,345', 'style="stroke-width:4"')}
        ${line('#17b017', 'M1070,346L1085,351 1110,344 1130,346 1180,345 1240,342 1260,330 1290,330 1310,318 1335,323 1355,308 1380,310 1395,300 1415,295', 'stroke-dasharray="11 4 3 4" style="stroke-width:4"')}
        ${line('#bce84f', 'M150,232H1417')}
        ${line('#4de8b4', 'M149,113H1418', 'style="stroke-width:4"')}
        <g fill="#b3831a" fill-opacity=".6"><rect x="759" y="408" width="35" height="417"/><rect x="851" y="408" width="58" height="417"/></g>
        <rect x="936" y="408" width="16" height="417" fill="#8b8a47" fill-opacity=".9"/>
      </g>
    </svg>`;
  });

define('help-text',
  `:host { display: block; }
   p, ul { margin: 0 0 27px; }
   p { padding-right: 12px; }
   p:last-child { margin-bottom: 0; }
   ul { padding-left: 80px; }
   li::before { content: ""; float: left; width: 10px; height: 10px; margin: 15px 0 0 -34px; border-radius: 50%; background: currentColor; }
   .keep { white-space: nowrap; }
   b { font-weight: 700; }`,
  `<p><b>Lighting</b> and <b>climate settings</b> (if enabled) are automatically adjusted between different scenes. You can also manually select a preferred scene here, or tell Siri/Google:</p>
   <ul><li><b>"lights on"</b> or <b>"lights off"</b> for the <em>Night</em> and <em>Day</em> scenes</li><li><b>"lights on bright"</b> for the <em>Bright</em> scene</li><li><b>"sleep time"</b> for the <em>Sleep</em> scene</li></ul>
   <p><b>Automatic climate control</b> will control all aircon units based on the current scene and the temperature throughout the house as well as outside. <b>Aircon</b> can also be manually turned on and off. These settings can be controlled by telling Siri/Google:</p>
   <ul><li><b>"climate control on"</b> or <b>"climate control off"</b></li><li><b>"aircon on"</b> or <b>"aircon off"</b></li></ul>
   <p>Each <b>scene</b> has a particular purpose:</p>
   <ul><li><b><em>Morning</em></b> is designed to trigger before anyone wakes up (at the time specified in the settings here), providing dim kitchen lighting plus climate control to the whole house (rather than just the bedroom). Thus when anyone does get up it is to a comfortable temperature and sufficient lighting.</li>
   <li><b><em>Day</em></b> is triggered when ambient lighting in the house is sufficient, and thus turns off all lighting.</li>
   <li><b><em>Night</em></b> is triggered when there is insufficent lighting, turning on the main lights in the <span class="keep">house. The</span> brightness and colour temperature of all lighting adjusts as the night goes on, getting dimmer and warmer so as to reduce <span class="keep">the impact</span> to your circadian rhythm.</li>
   <li><b><em>Sleep</em></b> turns off all lighting in the house. If climate control is enabled, only the bedroom is monitored and controlled. This scene has to be manually triggered.</li>
   <li><b><em>TV</em></b> dims the lights for a nice viewing experience, automatically triggered when the TV is playing at Night.</li>
   <li><b><em>Bright</em></b> turns all lights on at full brightness and has to be manually triggered.</li>
   <li><span class="keep"><b><em>Away (Night/Day)</em></b> turns off all lights (except one</span> obvious one at night for security purposes) <span class="keep">and disables</span> climate control. Automatically triggered when both of us have left the house.</li></ul>
   <p>The <b>buttons</b> in the kitchen and bedroom will intelligently change scene based on the current conditions. The bedroom button's key functions are to transition the scene from <b><em>Night</em></b> to <b><em>Sleep</em></b> while keeping the bedroom light on. When clicked again it will turn the bedroom light off. Otherwise the bedroom button will toggle motion detection based light control in the room. Holding either button will toggle the scene between <b><em>Bright</em></b> and <b><em>Night</em></b>.</p>
   <p>Lighting in the entryway, kitchen, office and bedroom will automatically brighten when someone enters, and dim shortly after they leave (depending on scene settings). Bedroom light adjustments are disabled as soon as the <em>Sleep</em> scene starts, only enabling again when the bedroom <b>button</b> is clicked.</p>
   <p>Only the bedroom aircon will be controlled after the specified bed time, regardless of the scene.</p>`);
</script>
</body>
</html>
